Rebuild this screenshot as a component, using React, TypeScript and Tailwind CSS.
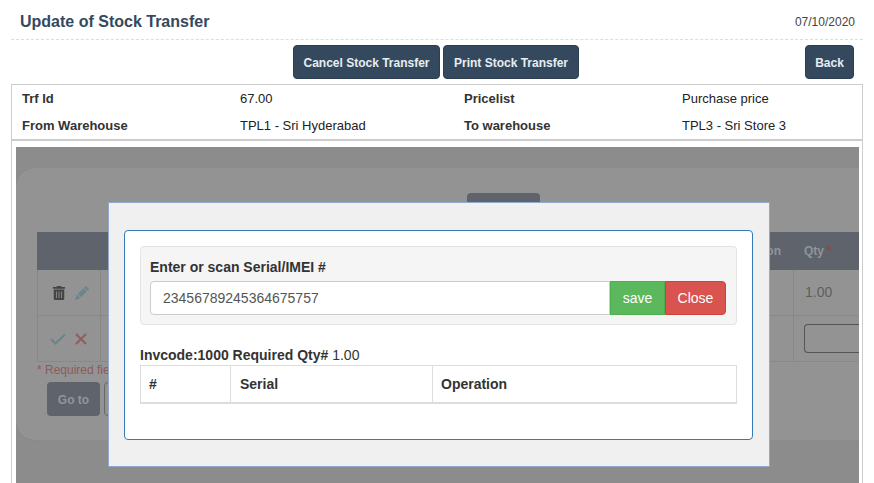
import { FaTrashAlt } from 'react-icons/fa';
import { BsPencilFill } from 'react-icons/bs';

const INFO = [
  ['Trf Id', '67.00', 'Pricelist', 'Purchase price'],
  ['From Warehouse', 'TPL1 - Sri Hyderabad', 'To warehouse', 'TPL3 - Sri Store 3'],
];

function DarkButton({ label, className }: { label: string; className: string }) {
  return (
    <button className={`h-[34px] rounded-[4px] border border-[#2c3e50] bg-[#34495e] pt-px text-[12px] font-bold text-[#e8edf2] ${className}`}>
      {label}
    </button>
  );
}

function BackgroundForm() {
  return (
    <div className="h-[336px] overflow-hidden bg-[#8c8c8c] pt-5">
      <div className="h-[274px] rounded-l-[20px] border-t border-b border-[#8a8a8a] bg-[#939393]">
        <div className="flex justify-center pt-[25px]">
          <div className="ml-[132px] h-[39px] w-[73px] rounded-[4px] bg-[#5f636b]" />
        </div>
        <div className="ml-[21px] -mt-[25px]">
          <div className="mt-[25px] flex h-[38px] items-center justify-end bg-[#5f636b] text-[12px] font-bold text-[#8f959c]">
            <span className="mr-[23px]">Action</span>
            <span className="w-[55px]">
              Qty <span className="text-[#8b4a4a]">*</span>
            </span>
          </div>
          <div className="flex h-[46px] border-b border-[#888888] text-[14px] text-[#5f5f5f]">
            <div className="flex w-[64px] items-center gap-[9px] border-x border-[#888888] pl-[14px]">
              <FaTrashAlt size={14} className="text-[#444444]" />
              <BsPencilFill size={14} className="text-[#6a8490]" />
            </div>
            <div className="flex-1" />
            <div className="flex w-[66px] items-center border-l border-[#888888] pl-[11px]">1.00</div>
          </div>
          <div className="flex h-[46px] border-b border-[#888888]">
            <div className="flex w-[64px] items-center gap-[9px] border-x border-[#888888] pl-[12px]">
              <svg width="16" height="12" viewBox="0 0 16 12" fill="none" stroke="#66858f" strokeWidth="2">
                <path d="M1 6l4.500 4.500L15 1.500" />
              </svg>
              <svg width="12" height="12" viewBox="0 0 12 12" fill="none" stroke="#8f5f5f" strokeWidth="2.200">
                <path d="M1 1l10 10M11 1L1 11" />
              </svg>
            </div>
            <div className="flex-1" />
            <div className="flex w-[66px] items-center border-l border-[#888888] pl-[10px]">
              <div className="h-[29px] w-full rounded-l-[4px] border border-r-0 border-[#555555]" />
            </div>
          </div>
          <p className="mt-[1px] text-[12px] leading-[14px] text-[#8f5a5a]">* Required fields</p>
          <div className="mt-[5px] ml-[10px] flex gap-[4px]">
            <div className="flex h-[34px] w-[53px] items-center justify-center rounded-[4px] bg-[#5f636b] pt-px text-[12px] font-bold text-[#8f959c]">
              Go to
            </div>
            <div className="h-[34px] w-[60px] rounded-[4px] border border-[#666666]" />
          </div>
        </div>
      </div>
    </div>
  );
}

function SerialModal() {
  return (
    <div className="absolute left-[108px] top-[202px] h-[265px] w-[662px] border border-[#8faacb] bg-[#f0f0f0] pl-[15px] pt-[27px]">
      <div className="h-[210px] w-[629px] rounded-[4px] border border-[#337ab7] bg-white pl-[15px] pt-[15px] text-[14px] text-[#333333]">
        <div className="h-[79px] w-[597px] rounded-[4px] border border-[#e3e3e3] bg-[#f5f5f5] pl-[9px] pt-[10px]">
          <p className="text-[14px] font-bold leading-[20px]">Enter or scan Serial/IMEI #</p>
          <div className="mt-[4px] flex h-[34px] w-[576px]">
            <div className="flex w-[460px] items-center rounded-l-[4px] border border-[#cccccc] bg-white pl-[12px] text-[#555555]">
              23456789245364675757
            </div>
            <button className="w-[55px] border border-[#4cae4c] bg-[#5cb85c] text-white">save</button>
            <button className="w-[61px] rounded-r-[4px] border border-[#d43f3a] bg-[#d9534f] text-white">Close</button>
          </div>
        </div>
        <p className="mt-[20px] h-[20px] leading-[20px]">
          <b>Invcode:1000 Required Qty#</b> 1.00
        </p>
        <div className="flex h-[39px] w-[597px] border border-b-2 border-[#dddddd] font-bold">
          <div className="flex w-[90px] items-center border-r border-[#dddddd] pl-[8px]">#</div>
          <div className="flex w-[202px] items-center border-r border-[#dddddd] pl-[9px]">Serial</div>
          <div className="flex flex-1 items-center pl-[8px]">Operation</div>
        </div>
      </div>
    </div>
  );
}

export default function App() {
  return (
    <div className="relative h-[483px] w-[874px] overflow-hidden bg-white font-['Liberation_Sans',Arial,sans-serif]">
      <div className="mx-[11px] flex h-[40px] items-center justify-between border-b border-dashed border-[#dddddd] pl-[9px] pr-[8px] pt-[4px]">
        <h1 className="text-[16px] font-bold text-[#34495e]">Update of Stock Transfer</h1>
        <span className="text-[12px] text-[#444444]">07/10/2020</span>
      </div>
      <div className="mx-[11px] mt-[5px] flex h-[34px] pl-[282px]">
        <DarkButton label="Cancel Stock Transfer" className="w-[147px]" />
        <DarkButton label="Print Stock Transfer" className="ml-[3px] w-[136px]" />
        <DarkButton label="Back" className="ml-[226px] w-[49px]" />
      </div>
      <div className="mx-[11px] mt-[5px] h-[57px] border border-b-2 border-[#cccccc] text-[13px] text-[#222222]">
        {INFO.map((row) => (
          <div key={row[0]} className="flex h-[27px] items-center pl-[10px]">
            <span className="w-[218px] font-bold text-[#333333]">{row[0]}</span>
            <span className="w-[224px]">{row[1]}</span>
            <span className="w-[218px] font-bold text-[#333333]">{row[2]}</span>
            <span>{row[3]}</span>
          </div>
        ))}
      </div>
      <div className="mx-[11px] border-x border-[#cccccc] pl-[4px] pr-[3px] pt-[6px]">
        <BackgroundForm />
      </div>
      <SerialModal />
    </div>
  );
}
